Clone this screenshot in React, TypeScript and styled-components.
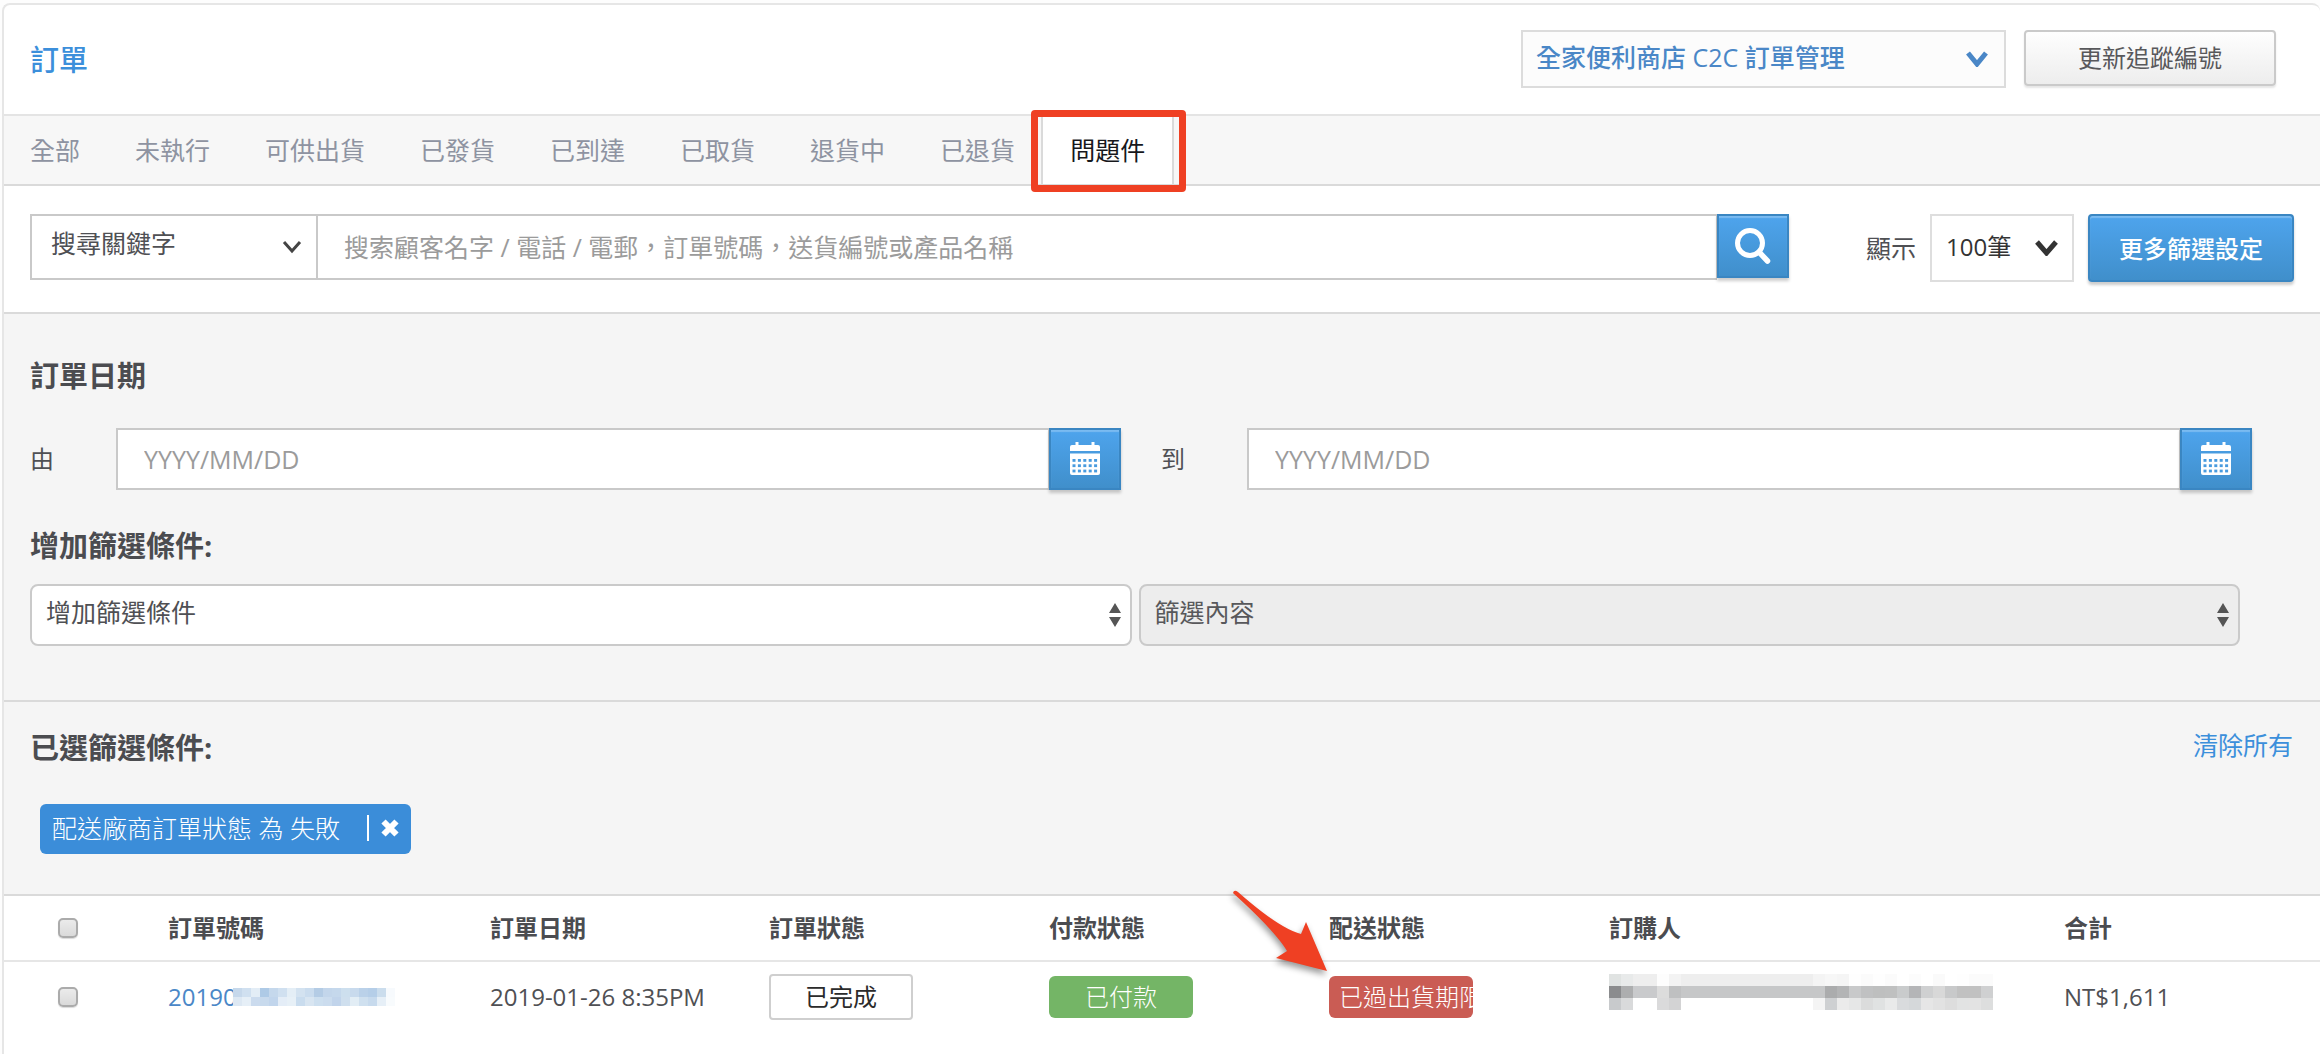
import React from "react";
import styled, { createGlobalStyle, css } from "styled-components";

const GlobalStyle = createGlobalStyle`
  *, *::before, *::after { box-sizing: border-box; }
  body {
    margin: 0;
    background: #fdfdfd;
    color: #4f5054;
    font-family: "Open Sans", "Noto Sans CJK TC", sans-serif;
    font-size: 24px;
    line-height: 36px;
  }
  button, input, select { font: inherit; color: inherit; margin: 0; border-radius: 0; }
  button { cursor: pointer; padding: 0; }
`;

const Card = styled.main`
  margin: 3px 0 0 2px;
  min-height: calc(100vh - 3px);
  background: #fff;
  border: 2px solid #e6e6e6;
  border-right: 0;
  border-bottom: 0;
  border-radius: 8px 8px 0 0;
`;

const Header = styled.header`
  display: flex;
  align-items: flex-start;
  justify-content: space-between;
  height: 109px;
  padding: 25px 44px 0 26px;
`;

const Title = styled.h1`
  margin: 9px 0 0;
  font-size: 29px;
  line-height: 42px;
  font-weight: 500;
  color: #3c8fdb;
`;

const HeaderActions = styled.div`
  display: flex;
  gap: 18px;
`;

const PickerBox = styled.div<{ $width?: number }>`
  display: grid;
  align-items: center;
  ${(p) => (p.$width ? css`width: ${p.$width}px; flex: none;` : "")}

  > * { grid-area: 1 / 1; }
  > svg { justify-self: end; pointer-events: none; }
`;

const ChannelSelect = styled.select`
  appearance: none;
  width: 100%;
  height: 58px;
  padding: 0 60px 4px 13px;
  background: #fcfcfc;
  border: 2px solid #dcdcdc;
  color: #4a87c7;
  font-size: 25px;
  font-weight: 500;
`;

const PlainButton = styled.button`
  width: 252px;
  height: 56px;
  background: linear-gradient(#fefefe, #ededed);
  border: 2px solid #cacaca;
  border-radius: 4px;
  box-shadow: 0 2px 2px rgba(0, 0, 0, 0.1);
  color: #58585b;
`;

const Tabs = styled.nav`
  display: flex;
  height: 72px;
  background: #f7f7f7;
  border-top: 2px solid #e4e4e4;
  border-bottom: 2px solid #dadada;
`;

const Tab = styled.a<{ $active?: boolean }>`
  position: relative;
  margin-left: -3px;
  padding: 0 27px;
  border: solid transparent;
  border-width: 0 2px;
  font-size: 25px;
  line-height: 68px;
  color: #8e93a1;
  text-decoration: none;
  white-space: nowrap;
  ${(p) =>
    p.$active &&
    css`
      background: #fff;
      border-color: #dadada;
      color: #17181c;
    `}
`;

const TabMark = styled.span`
  position: absolute;
  inset: -6px -14px -8px -12px;
  border: 7px solid #ef4023;
  border-radius: 4px;
  pointer-events: none;
`;

const SearchBar = styled.form`
  display: flex;
  align-items: flex-start;
  height: 128px;
  padding: 28px 26px 0;
  border-bottom: 2px solid #dadada;
`;

const FieldSelect = styled.select`
  appearance: none;
  width: 100%;
  height: 66px;
  padding: 0 50px 8px 19px;
  background: #fff;
  border: 2px solid #c9c9c9;
  border-right: 0;
  font-size: 25px;
`;

const TextInput = styled.input<{ $tall?: boolean }>`
  flex: 1;
  min-width: 0;
  height: ${(p) => (p.$tall ? 66 : 62)}px;
  padding: 0 26px;
  background: #fff;
  border: 2px solid #c9c9c9;
  border-right-width: 1px;
  font-size: 25px;

  &::placeholder { color: #9b9b9b; opacity: 1; }
`;

const blue = css`
  background: linear-gradient(#4ea4ed, #408fcb);
  border: 2px solid #3a86c2;
  box-shadow: inset 0 2px 1px rgba(255, 255, 255, 0.25), 0 3px 3px rgba(0, 0, 0, 0.2);
  color: #fff;
`;

const IconButton = styled.button<{ $tall?: boolean }>`
  ${blue}
  display: flex;
  align-items: center;
  justify-content: center;
  flex: none;
  width: 72px;
  height: ${(p) => (p.$tall ? 64 : 62)}px;
`;

const PageSize = styled.div`
  display: flex;
  align-items: center;
  gap: 14px;
  margin: 0 14px 0 77px;

  > label { font-size: 25px; }
`;

const SizeSelect = styled.select`
  appearance: none;
  width: 100%;
  height: 68px;
  padding: 0 40px 2px 14px;
  background: #fff;
  border: 2px solid #dedede;
  color: #333;
`;

const MoreButton = styled.button`
  ${blue}
  flex: none;
  width: 206px;
  height: 68px;
  padding-top: 2px;
  border-radius: 4px;
  font-weight: 500;
`;

const FilterPanel = styled.section`
  height: 388px;
  padding: 41px 0 0 26px;
  background: #f5f5f5;
  border-bottom: 2px solid #dadada;
`;

const Heading = styled.h2`
  margin: 0;
  font-size: 29px;
  line-height: 42px;
  font-weight: 700;
  color: #4b4c50;
`;

const DateRow = styled.div`
  display: flex;
  gap: 40px;
  margin: 31px 68px 35px 0;
`;

const DateField = styled.div`
  flex: 1;
  display: flex;
  align-items: center;

  > label { flex: none; width: 86px; }
`;

const ConditionRow = styled.div`
  display: grid;
  grid-template-columns: 1fr 1fr;
  gap: 7px;
  margin: 17px 80px 0 0;
`;

const ConditionSelect = styled.select`
  appearance: none;
  width: 100%;
  height: 62px;
  padding: 0 40px 6px 14px;
  background: #fff;
  border: 2px solid #cacaca;
  border-radius: 8px;
  font-size: 25px;
  opacity: 1;

  &:disabled { background: #ededed; color: #58585b; }
`;

const ChosenPanel = styled.section`
  height: 194px;
  padding: 25px 27px 0 26px;
  background: #f5f5f5;
  border-bottom: 2px solid #dadada;
`;

const ChosenHead = styled.div`
  display: flex;
  justify-content: space-between;
`;

const ClearLink = styled.a`
  font-size: 25px;
  color: #3c8fdb;
  text-decoration: none;
`;

const Tag = styled.div`
  display: inline-flex;
  align-items: center;
  height: 50px;
  margin: 35px 0 0 10px;
  padding: 0 12px 2px 12px;
  background: #3b8dd9;
  border-radius: 6px;
  color: #fff;
  font-size: 25px;
  font-weight: 300;
`;

const TagRemove = styled.button`
  display: flex;
  align-items: center;
  height: 26px;
  margin-left: 27px;
  padding-left: 12px;
  background: none;
  border: 0;
  border-left: 2px solid #fff;
`;

const OrderTable = styled.table`
  width: 100%;
  table-layout: fixed;
  border-collapse: collapse;

  th, td { padding: 0; text-align: left; white-space: nowrap; }
  th { height: 65px; font-weight: 700; color: #4b4c50; border-bottom: 2px solid #e6e6e6; }
  td { height: 70px; }
`;

const Check = styled.input`
  appearance: none;
  display: block;
  width: 20px;
  height: 20px;
  margin: 0 0 0 54px;
  background: linear-gradient(#ebebeb, #dadada);
  border: 2px solid #ababab;
  border-radius: 5px;
  box-shadow: 0 1px 1px rgba(0, 0, 0, 0.15);
`;

const OrderLink = styled.a`
  display: flex;
  align-items: center;
  color: #4a87c7;
  text-decoration: none;

  > svg { margin-left: -4px; }
`;

const BadgeSlot = styled.div`
  position: relative;
`;

const Badge = styled.span<{ $tone: "plain" | "green" | "red" }>`
  display: block;
  width: 144px;
  height: 42px;
  padding: 0 10px;
  overflow: hidden;
  border-radius: 6px;
  line-height: 42px;
  text-align: center;
  color: #fff;
  font-weight: 300;
  background: ${(p) => (p.$tone === "green" ? "#74b566" : "#ca5c54")};
  ${(p) => p.$tone === "red" && css`text-align: left;`}
  ${(p) =>
    p.$tone === "plain" &&
    css`
      height: 46px;
      background: #fff;
      border: 2px solid #cfcfcf;
      border-radius: 4px;
      color: #2b2b2b;
      font-weight: 400;
    `}
`;

const Pointer = styled.svg`
  position: absolute;
  left: -99px;
  top: -90px;
  overflow: visible;
  filter: drop-shadow(-1px 4px 3px rgba(0, 0, 0, 0.4));
`;

const Chevron = styled.svg<{ $inset: number }>`
  margin-right: ${(p) => p.$inset}px;
`;

function Down({ w, h, stroke, color, inset }: { w: number; h: number; stroke: number; color: string; inset: number }) {
  return (
    <Chevron $inset={inset} width={w} height={h} viewBox={`0 0 ${w} ${h}`} fill="none" stroke={color} strokeWidth={stroke} aria-hidden>
      <path d={`M2 2 L${w / 2} ${h - 3} L${w - 2} 2`} />
    </Chevron>
  );
}

function UpDown() {
  return (
    <Chevron $inset={11} width="12" height="24" viewBox="0 0 12 24" fill="#555" aria-hidden>
      <path d="M6 0 L12 10 H0 Z M0 14 H12 L6 24 Z" />
    </Chevron>
  );
}

function SearchIcon() {
  return (
    <svg width="36" height="36" viewBox="0 0 36 36" fill="none" stroke="#fff" aria-hidden>
      <circle cx="15" cy="15" r="12.5" strokeWidth="5" />
      <path d="M24 24 L32.5 33" strokeWidth="5.5" strokeLinecap="round" />
    </svg>
  );
}

function CalendarIcon() {
  const cells = [];
  for (let r = 0; r < 3; r++) {
    for (let c = 0; c < 5; c++) {
      cells.push(<rect key={`${r}-${c}`} x={2.5 + c * 5.4} y={17 + r * 5.3} width="3" height="2.8" fill="#489bdf" />);
    }
  }
  return (
    <svg width="30" height="34" viewBox="0 0 30 34" fill="#fff" aria-hidden>
      <path d="M5.500 0h3v3h13V0h3v3H28a2 2 0 0 1 2 2v4H0V5a2 2 0 0 1 2-2h3.500z" />
      <path d="M0 11.500h30V31a2 2 0 0 1-2 2H2a2 2 0 0 1-2-2z" />
      {cells}
    </svg>
  );
}

function Mosaic({ rows, cw, ch }: { rows: string[][]; cw: number; ch: number }) {
  const width = rows[0].length * cw;
  return (
    <svg width={width} height={rows.length * ch} shapeRendering="crispEdges" aria-hidden>
      {rows.map((row, y) =>
        row.map((fill, x) => <rect key={`${x}-${y}`} x={x * cw} y={y * ch} width={cw} height={ch} fill={`#${fill}`} />)
      )}
    </svg>
  );
}

const numberMask = [
  "c6d8eb d0e0f0 e3edf6 aecae6 c5d8ec d0e0f0 e4eef6 d3e2f0 cadcee b4cce5 c3d6eb c5d8ec cddfee c8daed bad1e9 b5cee8 cbdded f7fafd".split(" "),
  "dde8f3 e6eff7 cbdbee c8daed c1d5ec e4edf7 e7f0f7 c9dcee d8e5f1 cddfef cbdcee c1d4eb cfdfee e2edf5 cfe0ef c7daed e6eff7 f8fbfd".split(" "),
];

const fill = (n: number, c: string) => Array<string>(n).fill(c);

const customerMask = [
  ["e0e3e2", "e8eaea", "eeeeee", "eeeeee", "fdfdfd", "f3f3f3", ...fill(11, "eeeeee"), "f4f4f4", "f7f7f7", "f5f5f5", "fefefe", "fbfbfb", "fefefe", "fbfbfb", "ffffff", "fcfcfc", "ffffff", "fafafa", "ffffff", "fefefe", "fbfbfb", "fbfbfb"],
  ["8b8c8e", "adaeaf", "c9cacc", "c9cacc", "dcdcdc", "bfc0c1", ...fill(12, "c6c7c8"), "abacad", "b3b4b5", "c8c9ca", "c0c1c2", "bebfbf", "bfc0c0", "c9cbcc", "b4b5b7", "cfd0d1", "d8d8d8", "c8c9ca", "c1c1c1", "c1c1c1", "cfd0d1"],
  ["c8cacc", "d9dadb", "ffffff", "ffffff", "dadadb", "d3d3d4", ...fill(11, "ffffff"), "f4f4f4", "ced0d2", "ebebeb", "e6e7e7", "dbdcdc", "e0e2e2", "e9eaea", "d9dbdd", "d5d8da", "e6e6e6", "e2e2e2", "dddddd", "e2e3e3", "e3e3e3", "dddede"],
];

const tabs = ["全部", "未執行", "可供出貨", "已發貨", "已到達", "已取貨", "退貨中", "已退貨", "問題件"];
const columns = [
  { name: "訂單號碼", width: 322 },
  { name: "訂單日期", width: 279 },
  { name: "訂單狀態", width: 280 },
  { name: "付款狀態", width: 280 },
  { name: "配送狀態", width: 280 },
  { name: "訂購人", width: 455 },
  { name: "合計", width: 256 },
];

function DateInput({ id, label }: { id: string; label: string }) {
  return (
    <DateField>
      <label htmlFor={id}>{label}</label>
      <TextInput id={id} placeholder="YYYY/MM/DD" />
      <IconButton type="button" aria-label="calendar">
        <CalendarIcon />
      </IconButton>
    </DateField>
  );
}

export default function App() {
  return (
    <>
      <GlobalStyle />
      <Card>
        <Header>
          <Title>訂單</Title>
          <HeaderActions>
            <PickerBox $width={485}>
              <ChannelSelect aria-label="訂單管理">
                <option>全家便利商店 C2C 訂單管理</option>
              </ChannelSelect>
              <Down w={22} h={16} stroke={5} color="#4a87c7" inset={18} />
            </PickerBox>
            <PlainButton type="button">更新追蹤編號</PlainButton>
          </HeaderActions>
        </Header>

        <Tabs>
          {tabs.map((name, i) => (
            <Tab key={name} href="#" $active={i === tabs.length - 1}>
              {name}
              {i === tabs.length - 1 && <TabMark />}
            </Tab>
          ))}
        </Tabs>

        <SearchBar onSubmit={(e: React.FormEvent) => e.preventDefault()}>
          <PickerBox $width={286}>
            <FieldSelect aria-label="搜尋欄位">
              <option>搜尋關鍵字</option>
            </FieldSelect>
            <Down w={20} h={14} stroke={3} color="#444" inset={14} />
          </PickerBox>
          <TextInput $tall aria-label="搜索" placeholder="搜索顧客名字 / 電話 / 電郵，訂單號碼，送貨編號或產品名稱" />
          <IconButton $tall aria-label="search">
            <SearchIcon />
          </IconButton>
          <PageSize>
            <label htmlFor="size">顯示</label>
            <PickerBox $width={144}>
              <SizeSelect id="size">
                <option>100筆</option>
              </SizeSelect>
              <Down w={23} h={16} stroke={5} color="#333" inset={16} />
            </PickerBox>
          </PageSize>
          <MoreButton type="button">更多篩選設定</MoreButton>
        </SearchBar>

        <FilterPanel>
          <Heading>訂單日期</Heading>
          <DateRow>
            <DateInput id="from" label="由" />
            <DateInput id="to" label="到" />
          </DateRow>
          <Heading>增加篩選條件:</Heading>
          <ConditionRow>
            <PickerBox>
              <ConditionSelect aria-label="增加篩選條件">
                <option>增加篩選條件</option>
              </ConditionSelect>
              <UpDown />
            </PickerBox>
            <PickerBox>
              <ConditionSelect aria-label="篩選內容" disabled>
                <option>篩選內容</option>
              </ConditionSelect>
              <UpDown />
            </PickerBox>
          </ConditionRow>
        </FilterPanel>

        <ChosenPanel>
          <ChosenHead>
            <Heading>已選篩選條件:</Heading>
            <ClearLink href="#">清除所有</ClearLink>
          </ChosenHead>
          <Tag>
            配送廠商訂單狀態 為 失敗
            <TagRemove type="button" aria-label="remove">
              <svg width="18" height="18" viewBox="0 0 18 18" stroke="#fff" strokeWidth="6" aria-hidden>
                <path d="M2.500 2.500 L15.500 15.500 M15.500 2.500 L2.500 15.500" />
              </svg>
            </TagRemove>
          </Tag>
        </ChosenPanel>

        <OrderTable>
          <colgroup>
            <col width={164} />
            {columns.map((c) => (
              <col key={c.name} width={c.width} />
            ))}
          </colgroup>
          <thead>
            <tr>
              <th>
                <Check type="checkbox" aria-label="select all" />
              </th>
              {columns.map((c) => (
                <th key={c.name}>{c.name}</th>
              ))}
            </tr>
          </thead>
          <tbody>
            <tr>
              <td>
                <Check type="checkbox" aria-label="select order" />
              </td>
              <td>
                <OrderLink href="#">
                  20190
                  <Mosaic rows={numberMask} cw={9} ch={9} />
                </OrderLink>
              </td>
              <td>2019-01-26 8:35PM</td>
              <td>
                <Badge $tone="plain">已完成</Badge>
              </td>
              <td>
                <Badge $tone="green">已付款</Badge>
              </td>
              <td>
                <BadgeSlot>
                  <Badge $tone="red">已過出貨期限</Badge>
                  <Pointer width="100" height="90" viewBox="0 0 100 90" aria-hidden>
                    <path d="M3 7 Q4 3 8 6 Q50 43 71 48 L76 36 L97 85 L46 72 L57 65 Q46 46 3 7 Z" fill="#ef4023" />
                  </Pointer>
                </BadgeSlot>
              </td>
              <td>
                <Mosaic rows={customerMask} cw={12} ch={12} />
              </td>
              <td>NT$1,611</td>
            </tr>
          </tbody>
        </OrderTable>
      </Card>
    </>
  );
}
